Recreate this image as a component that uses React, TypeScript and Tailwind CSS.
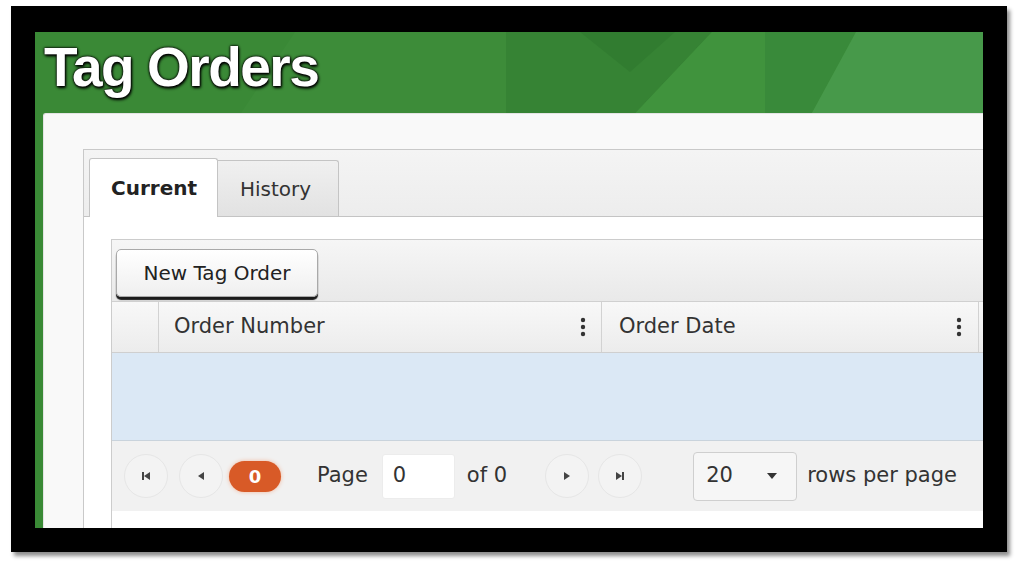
import React from 'react';

const uiFont = { fontFamily: '"DejaVu Sans", "Liberation Sans", sans-serif' };

const Kebab: React.FC = () => (
  <svg width="6" height="20" viewBox="0 0 6 20" className="shrink-0">
    <circle cx="3" cy="3" r="2.2" fill="#333" />
    <circle cx="3" cy="10" r="2.2" fill="#333" />
    <circle cx="3" cy="17" r="2.2" fill="#333" />
  </svg>
);

// little round pager buttons (first / prev / next / last)
const PagerButton: React.FC<{ kind: 'first' | 'prev' | 'next' | 'last' }> = ({ kind }) => (
  <div className="w-[44px] h-[44px] rounded-full bg-[#f3f3f3] border border-[#e6e6e6] flex items-center justify-center shrink-0">
    <svg width="12" height="10" viewBox="0 0 12 10">
      {kind === 'first' && (
        <>
          <rect x="2" y="1" width="2" height="8" fill="#444" />
          <path d="M 10 1 L 4 5 L 10 9 Z" fill="#444" />
        </>
      )}
      {kind === 'prev' && <path d="M 9 1 L 3 5 L 9 9 Z" fill="#444" />}
      {kind === 'next' && <path d="M 3 1 L 9 5 L 3 9 Z" fill="#444" />}
      {kind === 'last' && (
        <>
          <path d="M 2 1 L 8 5 L 2 9 Z" fill="#444" />
          <rect x="8" y="1" width="2" height="8" fill="#444" />
        </>
      )}
    </svg>
  </div>
);

const App: React.FC = () => {
  return (
    <div className="w-[1024px] h-[564px] bg-white overflow-hidden pt-[6px] pl-[11px]">
      {/* black frame around the screenshot */}
      <div className="w-[996px] h-[546px] bg-black pt-[26px] pl-[24px] shadow-[3px_4px_4px_rgba(0,0,0,0.45)]">
        <div className="relative w-[948px] h-[496px] overflow-hidden bg-[#3a8a36] flex flex-col">
          {/* header background facets */}
          <svg className="absolute left-0 top-0" width="948" height="90" viewBox="0 0 948 90">
            <rect x="0" y="0" width="948" height="90" fill="#3d8c39" />
            <polygon points="0,0 260,0 200,90 0,90" fill="#3a8936" />
            <polygon points="471,0 677,0 592,90 471,90" fill="#368334" />
            <polygon points="545,0 640,0 595,40" fill="#317c30" />
            <polygon points="677,0 730,0 730,90 592,90" fill="#40933d" />
            <polygon points="730,0 821,0 772,90 730,90" fill="#398a3a" />
            <polygon points="821,0 948,0 948,90 772,90" fill="#47994a" />
          </svg>

          <div className="relative h-[81px] pl-[9px] pt-[8px] shrink-0">
            <h1
              className="text-[55px] leading-none font-bold text-white tracking-[-1.5px] [text-shadow:0_0_2px_#000,0_0_3px_#000,1px_2px_3px_#000]"
              style={{ fontFamily: '"Liberation Sans", Arial, sans-serif' }}
            >
              Tag Orders
            </h1>
          </div>

          {/* white panel */}
          <div className="relative ml-[8px] flex-1 bg-[#f9f9f9] border-t border-l border-[#e4e4e4] rounded-tl-[3px] pl-[39px] pt-[35px]" style={uiFont}>
            <div className="h-full border-l border-t border-[#c9c9c9] flex flex-col">
              {/* tab strip */}
              <div className="flex items-end pl-[5px] pt-[8px] bg-gradient-to-b from-[#f4f4f4] to-[#ededed] border-b border-[#c4c4c4] shrink-0">
                <div className="w-[129px] h-[59px] -mb-px bg-white border border-b-0 border-[#c4c4c4] rounded-t-[3px] flex items-center pl-[21px] text-[20px] font-bold text-[#222]">
                  Current
                </div>
                <div className="w-[121px] h-[56px] bg-gradient-to-b from-[#f0f0f0] to-[#e2e2e2] border border-l-0 border-b-0 border-[#c4c4c4] rounded-tr-[3px] flex items-center pl-[22px] text-[20px] text-[#333]">
                  History
                </div>
              </div>

              {/* tab content */}
              <div className="flex-1 bg-white pl-[27px] pt-[22px]">
                <div className="border-l border-t border-[#cccccc] w-[900px]">
                  {/* toolbar */}
                  <div className="h-[62px] bg-gradient-to-b from-[#f6f6f6] to-[#e9e9e9] pl-[4px] pt-[9px] border-b border-[#d0d0d0]">
                    <button className="w-[202px] h-[48px] rounded-[5px] bg-gradient-to-b from-white to-[#efefef] border border-[#a9a9a9] shadow-[0_3px_1px_#1a1a1a] text-[20px] text-[#222]">
                      New Tag Order
                    </button>
                  </div>

                  {/* column header */}
                  <div className="h-[51px] flex bg-gradient-to-b from-[#f8f8f8] to-[#ececec] border-b border-[#cfcfcf] text-[21px] text-[#333]">
                    <div className="w-[47px] border-r border-[#d2d2d2]" />
                    <div className="w-[443px] flex items-center justify-between pl-[15px] pr-[15px] border-r border-[#d2d2d2]">
                      <span>Order Number</span>
                      <Kebab />
                    </div>
                    <div className="w-[377px] flex items-center justify-between pl-[17px] pr-[16px] border-r border-[#d2d2d2]">
                      <span>Order Date</span>
                      <Kebab />
                    </div>
                  </div>

                  {/* empty selected row */}
                  <div className="h-[88px] bg-[#dbe8f5] border-b border-[#c9d3dc]" />

                  {/* pager */}
                  <div className="h-[70px] bg-[#f1f1f1] flex items-center pl-[12px] text-[21px] text-[#333]">
                    <PagerButton kind="first" />
                    <div className="ml-[11px]">
                      <PagerButton kind="prev" />
                    </div>
                    <div className="ml-[6px] w-[52px] h-[31px] rounded-full bg-[#d85a27] shadow-[0_0_4px_#f2b79c] flex items-center justify-center text-white font-bold text-[18px]">
                      0
                    </div>
                    <span className="ml-[36px]">Page</span>
                    <div className="ml-[14px] w-[73px] h-[45px] bg-white border border-[#ececec] rounded-[3px] flex items-center pl-[10px]">
                      0
                    </div>
                    <span className="ml-[12px]">of 0</span>
                    <div className="ml-[38px]">
                      <PagerButton kind="next" />
                    </div>
                    <div className="ml-[9px]">
                      <PagerButton kind="last" />
                    </div>
                    <div className="ml-[51px] w-[104px] h-[49px] bg-[#f6f6f6] border border-[#cfcfcf] rounded-[4px] flex items-center justify-between pl-[12px] pr-[18px]">
                      <span>20</span>
                      <svg width="12" height="8" viewBox="0 0 12 8">
                        <path d="M 1 1 L 11 1 L 6 7 Z" fill="#333" />
                      </svg>
                    </div>
                    <span className="ml-[10px]">rows per page</span>
                  </div>
                  <div className="h-[30px] bg-white" />
                </div>
              </div>
            </div>
          </div>
        </div>
      </div>
    </div>
  );
};

export default App;
